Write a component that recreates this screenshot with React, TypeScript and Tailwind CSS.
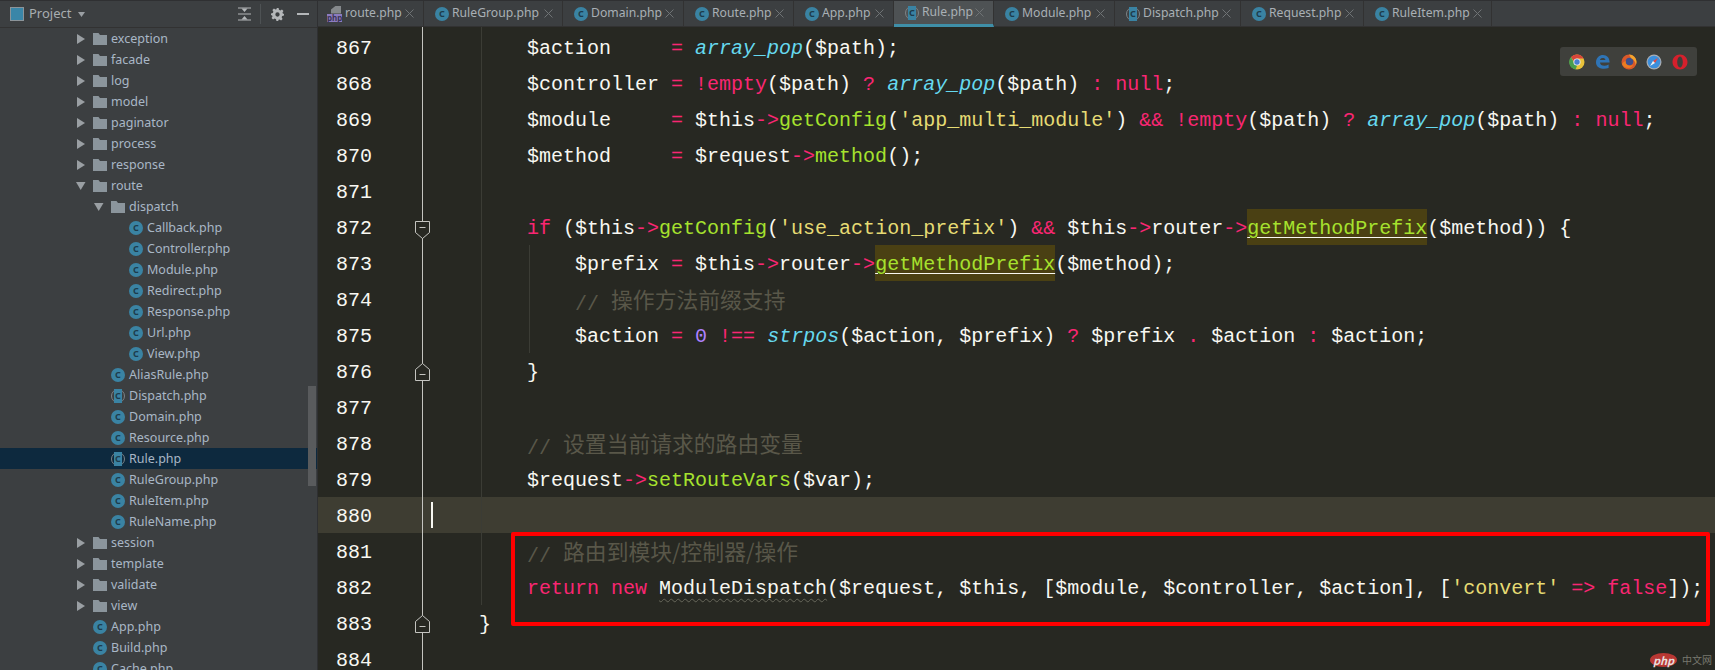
const P = 'text-[#f92672]';
const G = 'text-[#a6e22e]';
const C = 'italic text-[#66d9ef]';
const Y = 'text-[#e6db74]';
const V = 'text-[#ae81ff]';

type Seg = string | [string, string];

type TreeRow = { name: string; kind: 'closed' | 'open' | 'class' | 'abstract'; pad: string; selected?: boolean };

const tree: TreeRow[] = [
  { name: 'exception', kind: 'closed', pad: 'pl-[76px]' },
  { name: 'facade', kind: 'closed', pad: 'pl-[76px]' },
  { name: 'log', kind: 'closed', pad: 'pl-[76px]' },
  { name: 'model', kind: 'closed', pad: 'pl-[76px]' },
  { name: 'paginator', kind: 'closed', pad: 'pl-[76px]' },
  { name: 'process', kind: 'closed', pad: 'pl-[76px]' },
  { name: 'response', kind: 'closed', pad: 'pl-[76px]' },
  { name: 'route', kind: 'open', pad: 'pl-[76px]' },
  { name: 'dispatch', kind: 'open', pad: 'pl-[94px]' },
  { name: 'Callback.php', kind: 'class', pad: 'pl-[129px]' },
  { name: 'Controller.php', kind: 'class', pad: 'pl-[129px]' },
  { name: 'Module.php', kind: 'class', pad: 'pl-[129px]' },
  { name: 'Redirect.php', kind: 'class', pad: 'pl-[129px]' },
  { name: 'Response.php', kind: 'class', pad: 'pl-[129px]' },
  { name: 'Url.php', kind: 'class', pad: 'pl-[129px]' },
  { name: 'View.php', kind: 'class', pad: 'pl-[129px]' },
  { name: 'AliasRule.php', kind: 'class', pad: 'pl-[111px]' },
  { name: 'Dispatch.php', kind: 'abstract', pad: 'pl-[111px]' },
  { name: 'Domain.php', kind: 'class', pad: 'pl-[111px]' },
  { name: 'Resource.php', kind: 'class', pad: 'pl-[111px]' },
  { name: 'Rule.php', kind: 'abstract', pad: 'pl-[111px]', selected: true },
  { name: 'RuleGroup.php', kind: 'class', pad: 'pl-[111px]' },
  { name: 'RuleItem.php', kind: 'class', pad: 'pl-[111px]' },
  { name: 'RuleName.php', kind: 'class', pad: 'pl-[111px]' },
  { name: 'session', kind: 'closed', pad: 'pl-[76px]' },
  { name: 'template', kind: 'closed', pad: 'pl-[76px]' },
  { name: 'validate', kind: 'closed', pad: 'pl-[76px]' },
  { name: 'view', kind: 'closed', pad: 'pl-[76px]' },
  { name: 'App.php', kind: 'class', pad: 'pl-[93px]' },
  { name: 'Build.php', kind: 'class', pad: 'pl-[93px]' },
  { name: 'Cache.php', kind: 'class', pad: 'pl-[93px]' },
];

const tabs = [
  { name: 'route.php', icon: 'php', width: 'w-[106px]' },
  { name: 'RuleGroup.php', icon: 'class', width: 'w-[139px]' },
  { name: 'Domain.php', icon: 'class', width: 'w-[121px]' },
  { name: 'Route.php', icon: 'class', width: 'w-[110px]' },
  { name: 'App.php', icon: 'class', width: 'w-[100px]' },
  { name: 'Rule.php', icon: 'abstract', width: 'w-[100px]', active: true },
  { name: 'Module.php', icon: 'class', width: 'w-[121px]' },
  { name: 'Dispatch.php', icon: 'abstract', width: 'w-[126px]' },
  { name: 'Request.php', icon: 'class', width: 'w-[123px]' },
  { name: 'RuleItem.php', icon: 'class', width: 'w-[128px]' },
];

const lines: { no: number; segs: Seg[]; current?: boolean; fold?: 'down' | 'up' }[] = [
  { no: 867, segs: ['        $action     ', [P, '='], ' ', [C, 'array_pop'], '($path);'] },
  { no: 868, segs: ['        $controller ', [P, '='], ' ', [P, '!empty'], '($path) ', [P, '?'], ' ', [C, 'array_pop'], '($path) ', [P, ':'], ' ', [P, 'null'], ';'] },
  { no: 869, segs: ['        $module     ', [P, '='], ' $this', [P, '->'], [G, 'getConfig'], '(', [Y, "'app_multi_module'"], ') ', [P, '&&'], ' ', [P, '!empty'], '($path) ', [P, '?'], ' ', [C, 'array_pop'], '($path) ', [P, ':'], ' ', [P, 'null'], ';'] },
  { no: 870, segs: ['        $method     ', [P, '='], ' $request', [P, '->'], [G, 'method'], '();'] },
  { no: 871, segs: [] },
  { no: 872, fold: 'down', segs: ['        ', [P, 'if'], ' ($this', [P, '->'], [G, 'getConfig'], '(', [Y, "'use_action_prefix'"], ') ', [P, '&&'], ' $this', [P, '->'], 'router', [P, '->'], ['hl', 'getMethodPrefix'], '($method)) {'] },
  { no: 873, segs: ['            $prefix ', [P, '='], ' $this', [P, '->'], 'router', [P, '->'], ['hl', 'getMethodPrefix'], '($method);'] },
  { no: 874, segs: ['            ', ['cm', '// 操作方法前缀支持']] },
  { no: 875, segs: ['            $action ', [P, '='], ' ', [V, '0'], ' ', [P, '!=='], ' ', [C, 'strpos'], '($action, $prefix) ', [P, '?'], ' $prefix ', [P, '.'], ' $action ', [P, ':'], ' $action;'] },
  { no: 876, fold: 'up', segs: ['        }'] },
  { no: 877, segs: [] },
  { no: 878, segs: ['        ', ['cm', '// 设置当前请求的路由变量']] },
  { no: 879, segs: ['        $request', [P, '->'], [G, 'setRouteVars'], '($var);'] },
  { no: 880, segs: [], current: true },
  { no: 881, segs: ['        ', ['cm', '// 路由到模块/控制器/操作']] },
  { no: 882, segs: ['        ', [P, 'return'], ' ', [P, 'new'], ' ', ['wv', 'ModuleDispatch'], '($request, $this, [$module, $controller, $action], [', [Y, "'convert'"], ' ', [P, '=>'], ' ', [P, 'false'], ']);'] },
  { no: 883, fold: 'up', segs: ['    }'] },
  { no: 884, segs: [] },
];

function Segment({ seg }: { seg: Seg }) {
  if (typeof seg === 'string') return <span>{seg}</span>;
  const [cls, text] = seg;
  if (cls === 'hl') {
    return (
      <span className={`inline-block h-9 bg-[#4a4013] underline decoration-[#f8f8f2] decoration-1 underline-offset-3 ${G}`}>{text}</span>
    );
  }
  if (cls === 'wv') {
    return <span className="underline decoration-wavy decoration-[#66665a] decoration-1 underline-offset-4">{text}</span>;
  }
  if (cls === 'cm') {
    return (
      <span className="text-[#595749]">
        {text.slice(0, 3)}
        <span className="relative -top-[2px] text-[21.8px] [font-family:'Noto_Sans_CJK_SC',sans-serif]">{text.slice(3)}</span>
      </span>
    );
  }
  return <span className={cls}>{text}</span>;
}

function ClassIcon() {
  return (
    <span className="flex h-[14px] w-[14px] shrink-0 items-center justify-center rounded-full bg-[#3a83a3] text-[9px] font-bold text-[#1d3c4c]">
      C
    </span>
  );
}

function AbstractIcon() {
  return (
    <span className="relative flex h-[14px] w-[14px] shrink-0 items-center justify-center rounded-full border border-[#7d8386]">
      <span className="flex h-[14px] w-[8px] items-center justify-center bg-[#3a83a3] text-[9px] font-bold text-[#1d3c4c]">C</span>
    </span>
  );
}

function PhpIcon() {
  return (
    <span className="relative flex h-[16px] w-[15px] shrink-0 flex-col items-center">
      <span className="ml-[3px] h-[8px] w-[10px] bg-[#85898c] [clip-path:polygon(50%_0,100%_0,100%_100%,0_100%,0_50%)]" />
      <span className="h-[8px] w-[15px] bg-[#8c7cc0] text-center text-[8px] leading-[8px] font-bold text-[#3c3556]">php</span>
    </span>
  );
}

function Arrow({ open }: { open: boolean }) {
  return open ? (
    <svg width="10" height="10" viewBox="0 0 10 10" className="shrink-0"><path d="M0 1h9.5L4.7 9z" fill="#9a9fa3" /></svg>
  ) : (
    <svg width="10" height="10" viewBox="0 0 10 10" className="shrink-0"><path d="M1 0l8 5-8 5z" fill="#9a9fa3" /></svg>
  );
}

function Folder() {
  return (
    <svg width="14" height="12" viewBox="0 0 14 12" className="shrink-0"><path d="M0 0h5.5l1.5 2h7v10H0z" fill="#8b959c" /></svg>
  );
}

function FoldMark({ dir }: { dir: 'down' | 'up' }) {
  return (
    <svg
      width="15"
      height="18"
      viewBox="0 0 15 18"
      className={`absolute left-[97px] ${dir === 'down' ? 'top-[12px]' : 'top-[10px]'}`}
    >
      <path
        d={dir === 'down' ? 'M.5.5h14v11l-7 6-7-6z' : 'M.5 17.5h14v-11l-7-6-7 6z'}
        fill="#272822"
        stroke="#c4c4c0"
      />
      <path d={dir === 'down' ? 'M4.5 6.5h6' : 'M4.5 11.5h6'} stroke="#c4c4c0" />
    </svg>
  );
}

function BrowserIcons() {
  return (
    <div className="absolute top-[20px] left-[1242px] flex h-[29px] w-[137px] items-center justify-between rounded-[3px] bg-[#3f403c] px-[9px]">
      <svg width="16" height="16" viewBox="0 0 16 16">
        <circle cx="8" cy="8" r="7.5" fill="#e8c23a" />
        <path d="M8 .5A7.5 7.5 0 0 1 14.6 4.5H8A3.5 3.5 0 0 0 4.6 7L2 3A7.5 7.5 0 0 1 8 .5z" fill="#d8443a" />
        <path d="M2 3l3 5.5L8 12l-1.5 3.4A7.5 7.5 0 0 1 2 3z" fill="#4a9e4f" />
        <circle cx="8" cy="8" r="3.6" fill="#e8e8ee" />
        <circle cx="8" cy="8" r="2.7" fill="#4a80d0" />
      </svg>
      <svg width="16" height="16" viewBox="0 0 16 16">
        <path d="M1 8.5C1 3.5 4.4 1 8 1c4 0 6.6 2.8 6.6 7.6H5c.2 3.3 4.8 4.2 8.6 2v3.4C8.500 16 1 14.500 1 8.500zM5 6h5.400C10.200 3.500 5.500 3.400 5 6z" fill="#2f74b5" />
      </svg>
      <svg width="16" height="16" viewBox="0 0 16 16">
        <circle cx="8" cy="8" r="7.500" fill="#d9582a" />
        <circle cx="8.500" cy="7.500" r="3.800" fill="#3e4f8c" />
        <path d="M8 .5c4 0 7.500 3.300 7.500 7.500 0 1-.3 2-.7 3-.3-3.200-2-5.800-4.300-6.600C9.700 3.800 9 2 8 .5z" fill="#f2a32c" />
        <path d="M1 10c1.500 3 4 4 6.500 4 2.200 0 4-1.500 4.500-3.500-1.500 1.500-4 1.800-5.500.5C4.800 10 4.500 8.500 4.700 7 3 7.500 1.800 8.500 1 10z" fill="#eb7d22" />
      </svg>
      <svg width="16" height="16" viewBox="0 0 16 16">
        <circle cx="8" cy="8" r="7.500" fill="#a9adb2" />
        <circle cx="8" cy="8" r="6.300" fill="#3c8fdd" />
        <path d="M12 4L9 9 7 7z" fill="#e9473f" />
        <path d="M4 12l3-5 2 2z" fill="#f4f4f4" />
      </svg>
      <svg width="16" height="16" viewBox="0 0 16 16">
        <path fillRule="evenodd" d="M8 .5c4.200 0 7.500 3.300 7.500 7.500s-3.300 7.500-7.500 7.500S.5 12.200.5 8 3.800.5 8 .5zm0 2C6.300 2.500 5.200 5 5.200 8s1.100 5.500 2.800 5.500 2.800-2.500 2.800-5.500S9.700 2.500 8 2.500z" fill="#d6202c" />
      </svg>
    </div>
  );
}

export default function App() {
  return (
    <div className="flex h-[670px] w-[1715px] overflow-hidden bg-[#272822] [font-family:'Noto_Sans',sans-serif]">
      <aside className="relative flex h-full w-[318px] shrink-0 flex-col overflow-hidden border-r border-[#2f3032] bg-[#3c3f41] text-[12.5px] text-[#a9b7c6]">
        <div className="flex h-[28px] shrink-0 items-center border-t border-b border-t-[#2f3032] border-b-[#323232] pl-[10px]">
          <span className="h-[14px] w-[14px] border border-[#8c9499] bg-[#3a86a8]" />
          <span className="ml-[5px] text-[13px] text-[#a8adb0]">Project</span>
          <svg width="7" height="5" viewBox="0 0 7 5" className="ml-[7px]"><path d="M0 0h7L3.500 5z" fill="#9a9fa3" /></svg>
          <svg width="13" height="14" viewBox="0 0 13 14" className="ml-[153px]">
            <path d="M0 7h13" stroke="#b4b7b9" />
            <path d="M0 1h13M0 13h13" stroke="#b4b7b9" />
            <path d="M3.500 1.500h6L6.500 5zM3.500 12.500h6L6.500 9z" fill="#b4b7b9" />
          </svg>
          <span className="ml-[9px] h-[20px] w-px bg-[#4e5254]" />
          <svg width="13" height="13" viewBox="0 0 24 24" className="ml-[10px]">
            <path
              fillRule="evenodd"
              d="M10 0h4l.7 3.300 2.600 1.100 2.900-1.800 2.800 2.800-1.800 2.900 1.100 2.600L24 10v4l-3.300.7-1.100 2.600 1.800 2.900-2.800 2.800-2.900-1.800-2.600 1.100L14 24h-4l-.7-3.300-2.600-1.100-2.900 1.800-2.800-2.800 1.800-2.900-1.100-2.600L0 14v-4l3.300-.7 1.100-2.600-1.800-2.900 2.800-2.800 2.900 1.800 2.600-1.100zM12 8a4 4 0 1 0 0 8 4 4 0 0 0 0-8z"
              fill="#b4b7b9"
            />
          </svg>
          <span className="ml-[13px] h-[2px] w-[12px] bg-[#b4b7b9]" />
        </div>
        <div className="flex flex-col">
          {tree.map((row) => (
            <div
              key={row.name}
              className={`flex h-[21px] shrink-0 items-center ${row.pad} ${row.selected ? 'bg-[#0d293e]' : ''}`}
            >
              {row.kind === 'closed' || row.kind === 'open' ? (
                <>
                  <Arrow open={row.kind === 'open'} />
                  <span className="ml-[7px]"><Folder /></span>
                </>
              ) : null}
              {row.kind === 'class' ? <ClassIcon /> : null}
              {row.kind === 'abstract' ? <AbstractIcon /> : null}
              <span className="ml-[4px] whitespace-nowrap leading-[21px]">{row.name}</span>
            </div>
          ))}
        </div>
        <div className="absolute top-[386px] left-[308px] h-[100px] w-[8px] bg-[#595b5d]" />
      </aside>

      <main className="flex min-w-0 flex-1 flex-col">
        <div className="flex h-[27px] shrink-0 border-t border-[#2f3032] bg-[#3c3f41] text-[12.2px] text-[#a9b0b5]">
          {tabs.map((tab) => (
            <div
              key={tab.name}
              className={`flex shrink-0 items-center border-r border-[#323232] ${tab.icon === 'php' ? 'pl-[9px]' : 'pl-[11px]'} pr-[9px] ${tab.width} ${tab.active ? 'border-b-[3px] border-b-[#3f8fa8] bg-[#4e5254]' : 'border-b border-b-[#323232]'}`}
            >
              {tab.icon === 'php' ? <PhpIcon /> : tab.icon === 'abstract' ? <AbstractIcon /> : <ClassIcon />}
              <span className="ml-[3px] whitespace-nowrap">{tab.name}</span>
              <svg width="9" height="9" viewBox="0 0 9 9" className="ml-auto shrink-0">
                <path d="M.5.5l8 8M8.500.5l-8 8" stroke="#6f7375" />
              </svg>
            </div>
          ))}
          <div className="flex-1 border-b border-[#323232]" />
        </div>

        <div className="relative flex-1 overflow-hidden bg-[#272822] pt-[2px] text-[20px] leading-[40px] text-[#f8f8f2] [font-family:'Liberation_Mono',monospace]">
          {lines.map((line) => (
            <div key={line.no} className={`relative flex h-9 ${line.current ? 'bg-[#3e3d32]' : ''}`}>
              <span className="w-[113px] shrink-0 pl-[18px]">{line.no}</span>
              <span className="whitespace-pre">
                {line.segs.map((seg, i) => (
                  <Segment key={i} seg={seg} />
                ))}
              </span>
              {line.current ? <span className="absolute top-[5px] left-[113px] h-[26px] w-[2px] bg-[#f8f8f2]" /> : null}
            </div>
          ))}
          <div className="absolute top-0 bottom-0 left-[104px] w-px bg-[#c4c4c0]" />
          <div className="absolute top-0 left-[163px] h-[578px] w-px bg-[#3b3c35]" />
          <div className="absolute top-[218px] left-[211px] h-[108px] w-px bg-[#3b3c35]" />
          {lines.filter((l) => l.fold).map((l) => (
            <div key={l.no} className="absolute left-0 h-9 w-0" style={{ top: 2 + (l.no - 867) * 36 }}>
              <FoldMark dir={l.fold as 'down' | 'up'} />
            </div>
          ))}
          <BrowserIcons />
          <div className="absolute top-[505px] left-[193px] h-[94px] w-[1199px] rounded-[2px] border-4 border-[#ff0000]" />
          <div className="absolute top-[626px] left-[1332px] flex items-center gap-[5px] [font-family:'Noto_Sans_CJK_SC',sans-serif]">
            <span className="flex h-[14px] w-[27px] items-center justify-center rounded-[50%] bg-[#b83733] text-[11px] leading-none font-bold text-[#e8dcdc] italic">php</span>
            <span className="text-[10px] leading-none text-[#77786f]">中文网</span>
          </div>
        </div>
      </main>
    </div>
  );
}
